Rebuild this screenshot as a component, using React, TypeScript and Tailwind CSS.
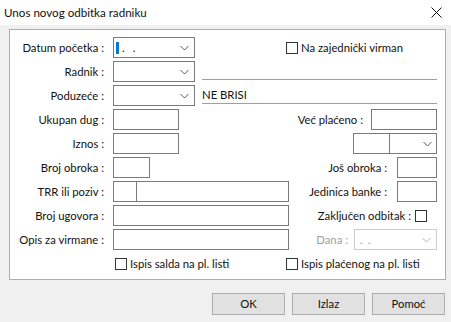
import React from "react";

function Chevron({ muted = false }: { muted?: boolean }) {
  return (
    <svg width="9" height="6" viewBox="0 0 9 6" className="shrink-0">
      <path
        d="M0.5 1 L4.5 5 L8.5 1"
        fill="none"
        stroke={muted ? "#b5b5b5" : "#5a5a5a"}
        strokeWidth="1"
      />
    </svg>
  );
}

function Check() {
  return <span className="box-border block h-[12px] w-[12px] shrink-0 border border-[#333] bg-white" />;
}

function Label({ children }: { children: React.ReactNode }) {
  return <span className="w-[94px] shrink-0 whitespace-nowrap text-right">{children}</span>;
}

function Field({ w }: { w: string }) {
  return <div className={`${w} box-border h-[21px] shrink-0 border border-[#7a7a7a] bg-white`} />;
}

export default function App() {
  return (
    <div className="h-[322px] w-[451px] overflow-hidden bg-[#f0f0f0] font-['Lato',sans-serif] text-[11.3px] leading-none text-[#111]">
      {/* title bar */}
      <div className="flex h-[25px] items-center justify-between bg-white pl-[4px] pr-[9px]">
        <span className="text-[11.6px]">Unos novog odbitka radniku</span>
        <svg width="11" height="11" viewBox="0 0 11 11">
          <path d="M0.5 0.5 L10.5 10.5 M10.5 0.5 L0.5 10.5" stroke="#111" strokeWidth="1" />
        </svg>
      </div>

      {/* group box */}
      <div className="ml-[9px] mt-[4px] box-border flex h-[251px] w-[437px] flex-col gap-[3px] border border-[#adadad] bg-white pb-[5px] pr-[8px] pt-[7px]">
        {/* Datum početka */}
        <div className="flex h-[21px] items-center">
          <Label>Datum početka :</Label>
          <div className="ml-[9px] box-border flex h-[21px] w-[82px] items-center border border-[#7a7a7a] pr-[5px]">
            <span className="ml-[2px] h-[12px] w-[3px] bg-[#0078d7]" />
            <span className="ml-[3px]">.</span>
            <span className="ml-[8px]">.</span>
            <span className="ml-auto">
              <Chevron />
            </span>
          </div>
          <div className="ml-[91px] flex items-center gap-[3px]">
            <Check />
            <span>Na zajednički virman</span>
          </div>
        </div>

        {/* Radnik */}
        <div className="flex h-[21px] items-center">
          <Label>Radnik :</Label>
          <div className="ml-[9px] box-border flex h-[21px] w-[82px] items-center justify-end border border-[#7a7a7a] pr-[5px]">
            <Chevron />
          </div>
          <div className="ml-[7px] mt-[12px] h-[4px] w-[235px] border-b border-[#a0a0a0]" />
        </div>

        {/* Poduzeće */}
        <div className="flex h-[21px] items-center">
          <Label>Poduzeće :</Label>
          <div className="ml-[9px] box-border flex h-[21px] w-[82px] items-center justify-end border border-[#7a7a7a] pr-[5px]">
            <Chevron />
          </div>
          <div className="ml-[7px] box-border flex h-[17px] w-[235px] items-center border-b border-[#a0a0a0] pb-[1px]">
            NE BRISI
          </div>
        </div>

        {/* Ukupan dug / Već plaćeno */}
        <div className="flex h-[21px] items-center">
          <Label>Ukupan dug :</Label>
          <div className="ml-[9px]">
            <Field w="w-[66px]" />
          </div>
          <div className="ml-auto flex items-center">
            <span className="mr-[8px]">Već plaćeno :</span>
            <Field w="w-[66px]" />
          </div>
        </div>

        {/* Iznos */}
        <div className="flex h-[21px] items-center">
          <Label>Iznos :</Label>
          <div className="ml-[9px]">
            <Field w="w-[66px]" />
          </div>
          <div className="ml-auto box-border flex h-[21px] w-[84px] border border-[#7a7a7a]">
            <div className="w-[36px] border-r border-[#7a7a7a]" />
            <div className="flex flex-1 items-center justify-end pr-[4px]">
              <Chevron />
            </div>
          </div>
        </div>

        {/* Broj obroka / Još obroka */}
        <div className="flex h-[21px] items-center">
          <Label>Broj obroka :</Label>
          <div className="ml-[9px]">
            <Field w="w-[37px]" />
          </div>
          <div className="ml-auto flex items-center">
            <span className="mr-[10px]">Još obroka :</span>
            <Field w="w-[40px]" />
          </div>
        </div>

        {/* TRR ili poziv / Jedinica banke */}
        <div className="flex h-[21px] items-center">
          <Label>TRR ili poziv :</Label>
          <div className="ml-[9px] box-border flex h-[21px] w-[176px] border border-[#7a7a7a]">
            <div className="w-[23px] border-r border-[#7a7a7a]" />
          </div>
          <div className="ml-auto flex items-center">
            <span className="mr-[10px]">Jedinica banke :</span>
            <Field w="w-[40px]" />
          </div>
        </div>

        {/* Broj ugovora / Zaključen odbitak */}
        <div className="flex h-[21px] items-center">
          <Label>Broj ugovora :</Label>
          <div className="ml-[9px]">
            <Field w="w-[176px]" />
          </div>
          <div className="ml-auto mr-[10px] flex items-center gap-[4px]">
            <span>Zaključen odbitak :</span>
            <Check />
          </div>
        </div>

        {/* Opis za virmane / Dana */}
        <div className="flex h-[21px] items-center">
          <Label>Opis za virmane :</Label>
          <div className="ml-[9px]">
            <Field w="w-[176px]" />
          </div>
          <div className="ml-auto flex items-center">
            <span className="mr-[6px] text-[#a0a0a0]">Dana :</span>
            <div className="box-border flex h-[21px] w-[83px] items-center border border-[#cccccc] pr-[5px] text-[#a0a0a0]">
              <span className="ml-[5px]">.</span>
              <span className="ml-[5px]">.</span>
              <span className="ml-auto">
                <Chevron muted />
              </span>
            </div>
          </div>
        </div>

        {/* bottom checkboxes */}
        <div className="flex h-[21px] items-center">
          <div className="ml-[105px] flex w-[171px] items-center gap-[3px]">
            <Check />
            <span>Ispis salda na pl. listi</span>
          </div>
          <div className="flex items-center gap-[3px]">
            <Check />
            <span>Ispis plaćenog na pl. listi</span>
          </div>
        </div>
      </div>

      {/* buttons */}
      <div className="mr-[6px] mt-[13px] flex justify-end gap-[7px]">
        {["OK", "Izlaz", "Pomoć"].map((b) => (
          <button
            key={b}
            className="box-border h-[22px] w-[73px] border border-[#adadad] bg-[#e1e1e1] text-[11.3px]"
          >
            {b}
          </button>
        ))}
      </div>
    </div>
  );
}
